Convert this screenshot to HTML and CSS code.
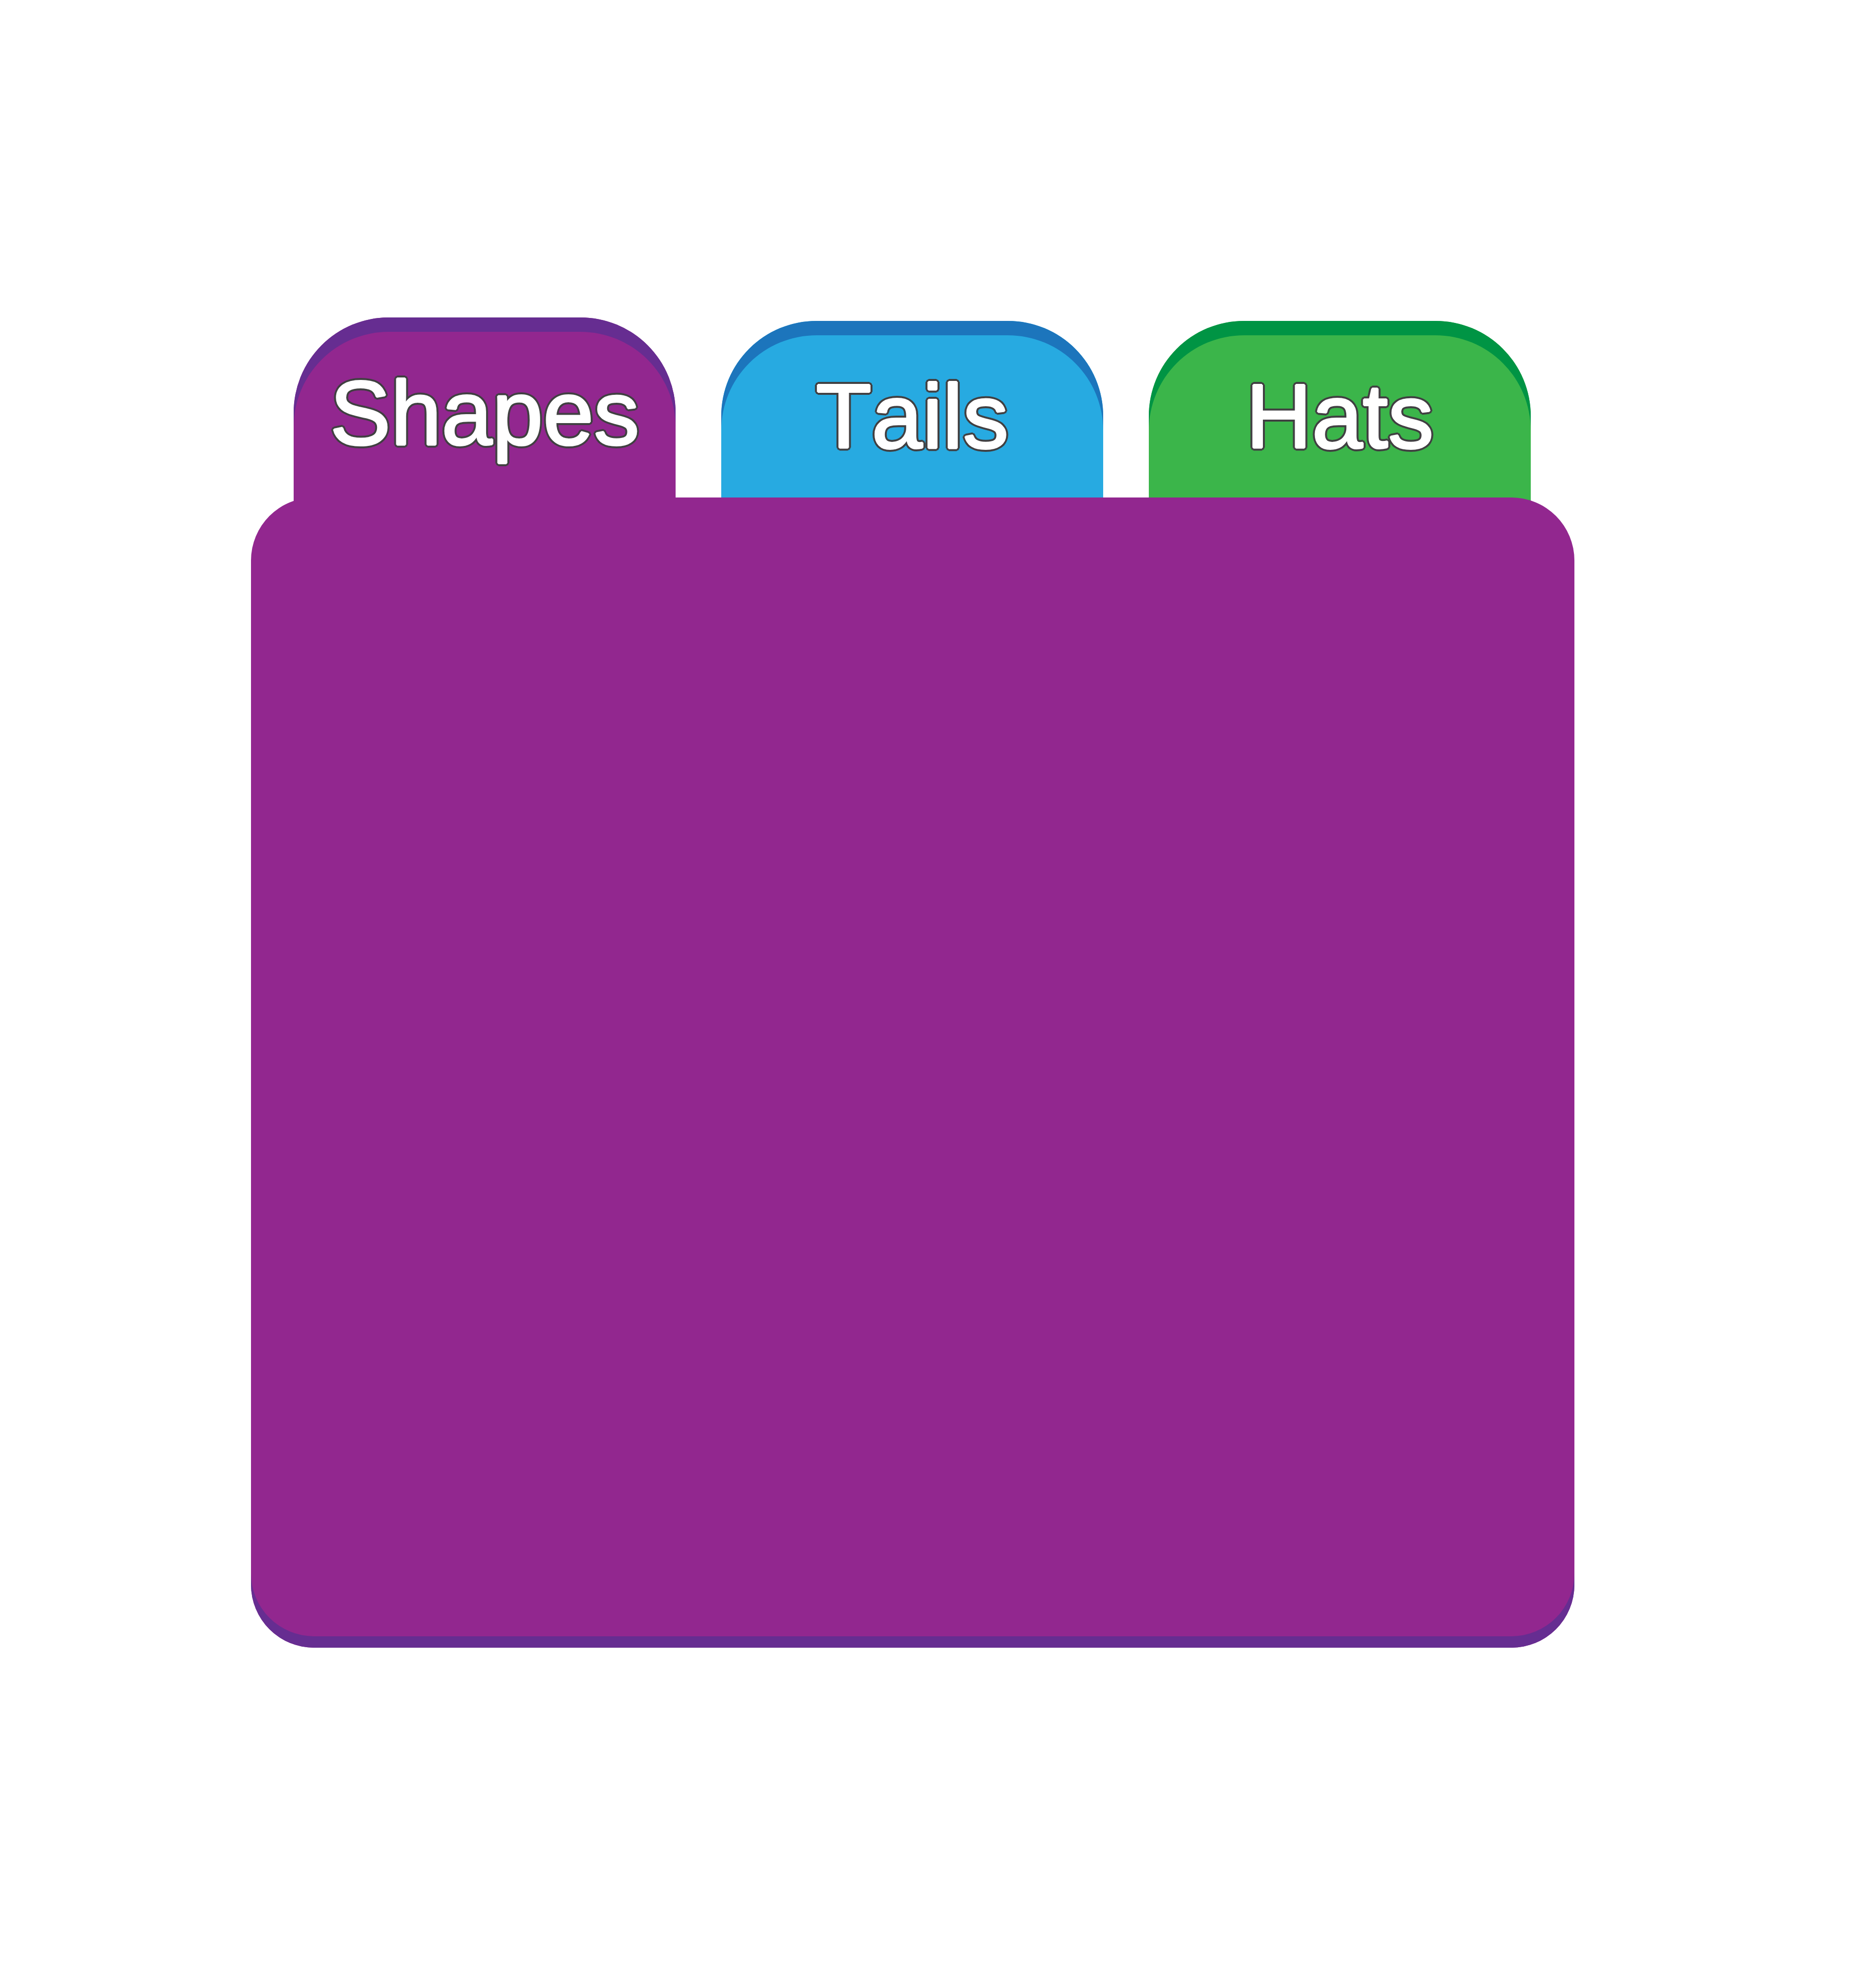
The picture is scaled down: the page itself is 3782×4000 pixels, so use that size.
FILE: index.html
```html
<!DOCTYPE html>
<html lang="en">
<head>
  <meta charset="utf-8">
  <meta name="viewport" content="width=device-width, initial-scale=1">
  <title>Shapes</title>
  <link rel="stylesheet" href="styles.css">
</head>
<body>
  <main class="page">
    <div class="tabs" role="tablist">
      <button class="tab tab-shapes" id="tab-shapes" type="button" role="tab" aria-selected="true" aria-controls="panel">Shapes</button>
      <button class="tab tab-tails" type="button" role="tab" aria-selected="false" aria-controls="panel">Tails</button>
      <button class="tab tab-hats" type="button" role="tab" aria-selected="false" aria-controls="panel">Hats</button>
    </div>
    <section class="panel" id="panel" role="tabpanel" aria-labelledby="tab-shapes"></section>
  </main>
</body>
</html>
```
FILE: styles.css
```css
* {
  box-sizing: border-box;
}

body {
  margin: 0;
  background: #fff;
  font-family: "Liberation Sans", Arial, sans-serif;
}

.page {
  padding: 640px 608px 640px 506px;
}

/* The tabs reach under the panel so its rounded corners show their colour. */
.tabs {
  display: flex;
  align-items: flex-end;
  gap: 92px;
  margin: 0 88px -20px 86px;
}

.tab {
  flex: 1 1 0;
  min-width: 0;
  padding: 92px 0 84px;
  border: 0;
  border-radius: 192px 192px 0 0;
  background: var(--face);
  box-shadow: inset 0 29px 0 var(--edge);
  color: #fff;
  font-family: inherit;
  font-size: 184px;
  font-weight: 400;
  font-kerning: none;
  line-height: 200px;
  text-align: center;
  cursor: pointer;
  /* White ring thickens and rounds the letters, dark ring outlines them. */
  text-shadow:
    2px 0 #fff, -2px 0 #fff, 0 2px #fff, 0 -2px #fff,
    1px 1px #fff, -1px 1px #fff, 1px -1px #fff, -1px -1px #fff,
    6px 0 #414042, -6px 0 #414042, 0 6px #414042, 0 -6px #414042,
    4px 4px #414042, -4px 4px #414042, 4px -4px #414042, -4px -4px #414042,
    5px 2px #414042, -5px 2px #414042, 5px -2px #414042, -5px -2px #414042,
    2px 5px #414042, -2px 5px #414042, 2px -5px #414042, -2px -5px #414042;
}

.tab[aria-selected="true"] {
  padding-bottom: 91px;
}

.tab-shapes {
  --face: #92278f;
  --edge: #662d91;
}

.tab-tails {
  --face: #27aae1;
  --edge: #1c75bc;
}

.tab-hats {
  --face: #3bb54a;
  --edge: #009444;
}

.panel {
  position: relative;
  min-height: 2319px;
  border-radius: 127px;
  background: #92278f;
  box-shadow: inset 0 -23px 0 #662d91;
}
```
